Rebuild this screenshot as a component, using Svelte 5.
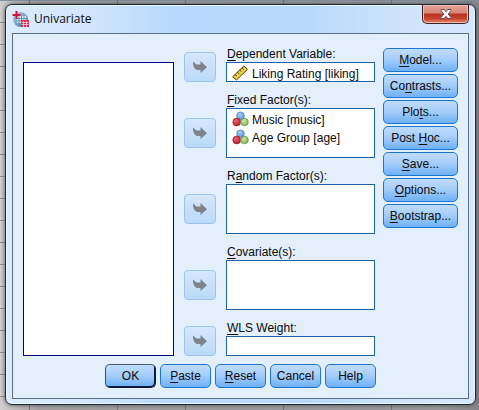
<script>
  const rows = [
    { id: 'dependent', key: '', u: 'D', rest: 'ependent Variable:', kind: 'single', items: [{ icon: 'scale', text: 'Liking Rating [liking]' }] },
    { id: 'fixed', key: '', u: 'F', rest: 'ixed Factor(s):', kind: 'multi', items: [{ icon: 'nominal', text: 'Music [music]' }, { icon: 'nominal', text: 'Age Group [age]' }] },
    { id: 'random', key: 'R', u: 'a', rest: 'ndom Factor(s):', kind: 'multi', items: [] },
    { id: 'covariate', key: '', u: 'C', rest: 'ovariate(s):', kind: 'multi', items: [] },
    { id: 'wls', key: '', u: 'W', rest: 'LS Weight:', kind: 'input', items: [] }
  ];
  const side = [
    ['', 'M', 'odel...'],
    ['Co', 'n', 'trasts...'],
    ['Plo', 't', 's...'],
    ['Post ', 'H', 'oc...'],
    ['', 'S', 'ave...'],
    ['', 'O', 'ptions...'],
    ['', 'B', 'ootstrap...']
  ];
  const actions = [
    ['OK', '', ''],
    ['', 'P', 'aste'],
    ['', 'R', 'eset'],
    ['Cancel', '', ''],
    ['Help', '', '']
  ];
  let weight = $state('');
</script>

<svg width="0" height="0" class="defs" aria-hidden="true">
  <defs>
    <radialGradient id="blue" cx=".4" cy=".35" r=".65"><stop offset="0" stop-color="#a8d0f8" /><stop offset="1" stop-color="#5a98dc" /></radialGradient>
    <radialGradient id="red" cx=".4" cy=".35" r=".65"><stop offset="0" stop-color="#ee6470" /><stop offset="1" stop-color="#bd1c2c" /></radialGradient>
    <radialGradient id="green" cx=".4" cy=".35" r=".65"><stop offset="0" stop-color="#c4e8a0" /><stop offset="1" stop-color="#86bd5c" /></radialGradient>
    <linearGradient id="globe" x1="0" y1="0" x2="1" y2="1"><stop offset="0" stop-color="#b4d0e8" /><stop offset="1" stop-color="#3d74aa" /></linearGradient>
  </defs>
</svg>

<main class="sheet">
  <section class="dialog" role="dialog" aria-labelledby="title">
    <header>
      <svg class="logo" viewBox="0 0 17 17" width="17" height="17" aria-hidden="true">
        <circle cx="8.5" cy="8.5" r="7.5" fill="url(#globe)" />
        <path d="M5 5h9v7H5z" fill="#e4eef8" />
        <path d="M5 7.500h9M5 10h9M7 5v8M9.500 5v8M12 5v8" stroke="#4b7cae" stroke-width=".8" />
        <path d="M4.500 0v8M.500 4h8" stroke="#d4143c" stroke-width="2" />
        <path d="M9 9h8v7H9z" fill="#d62a48" />
        <path d="M9.500 11.500h7M9.500 13.500h7M11.500 10v6M14.500 10v6" stroke="#f5d5de" stroke-width=".8" />
      </svg>
      <h1 id="title">Univariate</h1>
      <button class="close" aria-label="Close">
        <svg viewBox="0 0 12 10" width="12" height="10" aria-hidden="true">
          <path d="M1 .500h3.200L6 2.700 7.800.500H11v1L8.200 5 11 8.500v1H7.800L6 7.300 4.200 9.500H1v-1L3.800 5 1 1.500z" fill="#fff" stroke="#55434a" stroke-width=".9" />
        </svg>
      </button>
    </header>

    <div class="body">
      <div class="columns">
        <ul class="source" role="listbox" aria-label="Variables"></ul>

        <div class="fields">
          {#each rows as row}
            <div class="row {row.kind}">
              <button class="move" aria-label="Move variable">
                <svg viewBox="0 0 16 14" width="16" height="14" aria-hidden="true">
                  <path d="M1 1.500L4.500 4.500H8.500V1L15 7.200 8.500 13V10H5Q.500 8 1 1.500z" fill="#7f8388" />
                </svg>
              </button>
              <div class="field">
                <label id="{row.id}-label" for={row.id}>{row.key}<u>{row.u}</u>{row.rest}</label>
                {#if row.kind === 'input'}
                  <input id={row.id} class="box" type="text" bind:value={weight} />
                {:else}
                  <ul id={row.id} class="box" role="listbox" aria-labelledby="{row.id}-label">
                    {#each row.items as item}
                      <li role="option" aria-selected="false">
                        {#if item.icon === 'scale'}
                          <svg viewBox="0 0 17 16" width="17" height="16" aria-hidden="true">
                            <path d="M.700 11.800L11.800 1l3.700 3.300L4.500 15z" fill="#f4d43c" stroke="#3c3518" />
                            <path d="M3.200 9.500L5 11.200M5.500 7.300l1.800 1.700M7.800 5.100l1.800 1.700M10.100 2.900l1.800 1.700" stroke="#3c3518" />
                          </svg>
                        {:else}
                          <svg viewBox="0 0 17 16" width="17" height="16" aria-hidden="true">
                            <circle cx="8.500" cy="4.700" r="3.800" fill="url(#blue)" stroke="#4c7eb8" stroke-width=".7" />
                            <circle cx="4.700" cy="11" r="3.900" fill="url(#red)" stroke="#92222c" stroke-width=".7" />
                            <circle cx="12.500" cy="11" r="3.800" fill="url(#green)" stroke="#5d8a44" stroke-width=".7" />
                          </svg>
                        {/if}
                        <span>{item.text}</span>
                      </li>
                    {/each}
                  </ul>
                {/if}
              </div>
            </div>
          {/each}
        </div>

        <nav class="side" aria-label="Options">
          {#each side as [a, b, c]}
            <button class="btn">{a}<u>{b}</u>{c}</button>
          {/each}
        </nav>
      </div>

      <footer>
        {#each actions as [a, b, c], i}
          <button class="btn" class:default={i === 0}>{a}<u>{b}</u>{c}</button>
        {/each}
      </footer>
    </div>
  </section>
</main>

<style>
  .defs {
    position: absolute;
  }
  .sheet {
    box-sizing: border-box;
    min-height: 100vh;
    padding: 4px 3px 5px 5px;
    font: 12px/16px 'Liberation Sans', Arial, sans-serif;
    color: #0a0a0a;
    background:
      linear-gradient(#6d7780, #6d7780) 29px 0 / 1px 100% no-repeat,
      linear-gradient(#6d7780, #6d7780) 117px 0 / 1px 100% no-repeat,
      linear-gradient(#6d7780, #6d7780) 185px 0 / 1px 100% no-repeat,
      linear-gradient(#6d7780, #6d7780) 283px 0 / 1px 100% no-repeat,
      linear-gradient(#6d7780, #6d7780) 391px 0 / 1px 100% no-repeat,
      repeating-linear-gradient(#8090a0 0 1px, transparent 1px 22px),
      linear-gradient(90deg, #d2d0cf, #a3a1a2 8%, #98979a 92%, #858488);
  }
  .dialog {
    box-sizing: border-box;
    padding: 0 6px 5px;
    border: 1px solid #1d2c3c;
    border-radius: 7px;
    background: linear-gradient(90deg, #dcebfc, #cfe4fc 20%, #b7d9fd 35%, #b9d9fc 65%, #cfe4fb 85%, #d4e7fc);
    box-shadow: inset 0 0 0 1px #e9f5ff, 0 0 4px #48484c;
  }
  header {
    display: flex;
    height: 28px;
  }
  .logo {
    margin: 6px 5px 0 0;
  }
  h1 {
    flex: 1;
    margin: 5px 0 0;
    font: 12px/17px 'Open Sans', 'Noto Sans', sans-serif;
  }
  .close {
    display: grid;
    place-items: center;
    width: 47px;
    height: 19px;
    padding: 0;
    border: 1px solid #40242a;
    border-top: 0;
    border-radius: 0 0 5px 5px;
    background: linear-gradient(#e6a69a, #d68576 45%, #b93223 50%, #c9432f 75%, #e28a70);
    box-shadow: inset 0 0 0 1px #eebbb0;
  }
  .body {
    padding: 12px 10px 10px;
    border: 1px solid #5f6f82;
    background: #e3effb;
  }
  .columns {
    display: flex;
  }
  ul {
    margin: 0;
    padding: 0;
    list-style: none;
  }
  .source {
    box-sizing: border-box;
    flex: 1 1 0;
    margin-top: 16px;
    border: 1px solid #000080;
    background: #fff;
  }
  .fields {
    flex: 1 0 42px;
    display: flex;
    flex-direction: column;
    gap: 10px;
    margin: 0 8px 0 10px;
  }
  .row {
    display: flex;
    align-items: flex-end;
    gap: 10px;
  }
  .move {
    display: grid;
    place-items: center;
    flex: none;
    width: 32px;
    height: 30px;
    padding: 0;
    border: 1px solid #9dc3ea;
    border-radius: 4px;
    background: linear-gradient(#d6e8fb, #bad9f9);
  }
  .multi .move {
    margin-bottom: 10px;
  }
  .field {
    flex: 1;
    min-width: 0;
  }
  label {
    display: block;
    padding-left: 1px;
    white-space: nowrap;
  }
  .box {
    display: block;
    box-sizing: border-box;
    width: 100%;
    height: 20px;
    padding: 2px 5px 0;
    border: 1px solid #1b62a8;
    background: #fff;
    font: inherit;
  }
  .multi .box {
    height: 50px;
  }
  li {
    display: flex;
    gap: 3px;
    height: 18px;
    white-space: nowrap;
  }
  li span {
    line-height: 18px;
  }
  .side {
    display: flex;
    flex-direction: column;
    gap: 2px;
    width: 75px;
    padding-top: 2px;
  }
  .btn {
    height: 24px;
    padding: 0;
    border: 1px solid #1c76cf;
    border-radius: 5px;
    background: linear-gradient(#c0dcfb, #a6cefa 45%, #6fb0f5);
    color: inherit;
    font: 12px/16px 'Liberation Sans', Arial, sans-serif;
    white-space: nowrap;
  }
  .default {
    border-color: #4c5d72 #10193a #10193a #305070;
    box-shadow: inset -1px -1px #10193a;
  }
  footer {
    display: flex;
    justify-content: center;
    gap: 4px;
    margin-top: 8px;
  }
  footer .btn {
    width: 51px;
  }
  u {
    text-underline-offset: 2px;
    text-decoration-thickness: 1px;
  }
</style>
